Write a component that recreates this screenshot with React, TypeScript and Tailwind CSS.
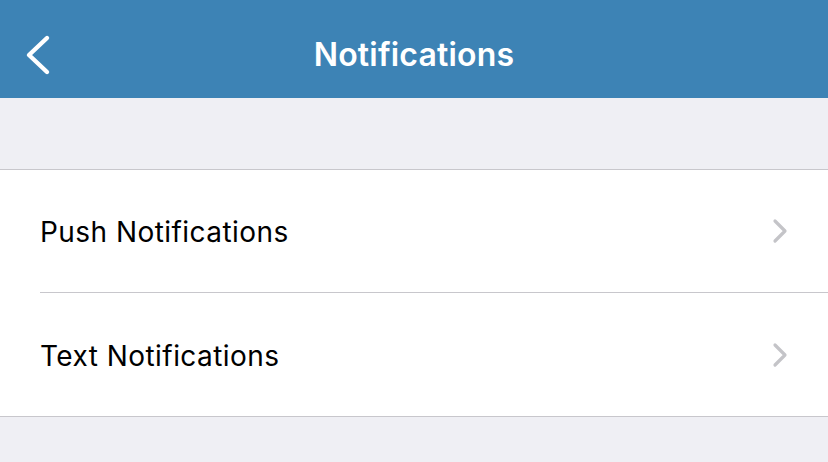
function Chevron() {
  return (
    <svg width="16" height="26" viewBox="0 0 16 26" fill="none" className="shrink-0">
      <path d="M3 3l10 10L3 23" stroke="#c4c4c8" strokeWidth="3.2" strokeLinecap="round" strokeLinejoin="round" />
    </svg>
  );
}

function Row({ label, last }: { label: string; last?: boolean }) {
  return (
    <div className="pl-10 bg-white">
      <div className={`flex items-center justify-between pr-10 h-[123px] ${last ? '' : 'border-b border-[#c8c7cc]'}`}>
        <span className="text-[28px] text-black tracking-[0.45px] pt-[2px]">{label}</span>
        <Chevron />
      </div>
    </div>
  );
}

export default function App() {
  return (
    <div className="w-[828px] h-[462px] bg-[#efeff4] overflow-hidden" style={{ fontFamily: 'Inter, "Noto Sans", sans-serif' }}>
      <header className="relative h-[98px] bg-[#3d83b5] flex items-center justify-center">
        <button className="absolute left-[18px] top-[30px] text-white">
          <svg width="40" height="50" viewBox="0 0 40 50" fill="none">
            <path d="M29 8L11 25l18 17" stroke="white" strokeWidth="4.4" strokeLinecap="round" strokeLinejoin="round" />
          </svg>
        </button>
        <h1 className="text-white text-[32px] font-semibold tracking-[0.2px] pt-[12px]">Notifications</h1>
      </header>
      <div className="h-[71px]" />
      <div className="border-t border-b border-[#c8c7cc] bg-white">
        <Row label="Push Notifications" />
        <Row label="Text Notifications" last />
      </div>
    </div>
  );
}
